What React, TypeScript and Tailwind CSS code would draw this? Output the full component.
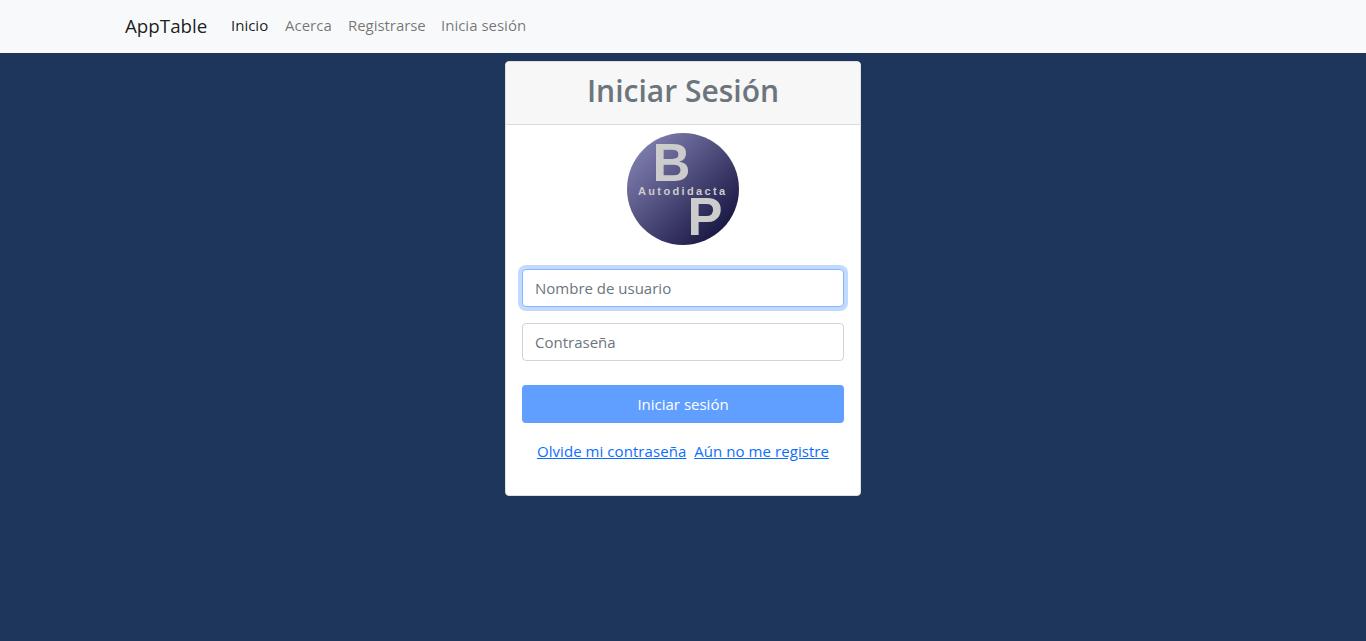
import React from "react";

const links = [
  { label: "Inicio", style: "w-[38px] text-black/90" },
  { label: "Acerca", style: "w-[47px] text-black/55" },
  { label: "Registrarse", style: "w-[77px] text-black/55 tracking-[-0.05px]" },
  { label: "Inicia sesión", style: "w-[85px] text-black/55" },
];

function Navbar() {
  return (
    <nav className="flex h-[53px] items-center bg-[#f8f9fa] pl-[125px] pb-px">
      <a href="#" className="mr-6 w-[82px] whitespace-nowrap text-[18.75px] leading-[30px] text-black/90">
        AppTable
      </a>
      <ul className="flex gap-4 pb-[3px]">
        {links.map((l) => (
          <li key={l.label} className={`whitespace-nowrap ${l.style}`}>
            <a href="#">{l.label}</a>
          </li>
        ))}
      </ul>
    </nav>
  );
}

function Logo() {
  return (
    <svg width="112" height="112" viewBox="0 0 112 112" className="mx-auto block" fontFamily="Liberation Sans, sans-serif" fontWeight="700" fill="#cccccc">
      <defs>
        <linearGradient id="disc" x1="0" y1="0" x2="0.9" y2="0.9">
          <stop offset="0" stopColor="#8e8ebf" />
          <stop offset="1" stopColor="#15123f" />
        </linearGradient>
      </defs>
      <circle cx="56" cy="56" r="56" fill="url(#disc)" />
      <text x="25.5" y="48" fontSize="53" textLength="38" lengthAdjust="spacingAndGlyphs">B</text>
      <text x="60.5" y="102" fontSize="53" textLength="35" lengthAdjust="spacingAndGlyphs">P</text>
      <text x="11" y="62" fontSize="11" letterSpacing="2.35">Autodidacta</text>
    </svg>
  );
}

const field =
  "block h-[38px] w-full rounded border bg-white px-3 pb-px text-[15px] outline-none placeholder:text-[#6c757d] placeholder:opacity-100";

export default function App() {
  return (
    <div className="min-h-screen bg-[#1e365c] font-['Open_Sans',sans-serif] text-[15px] leading-6">
      <Navbar />
      <main className="mx-auto mt-2 h-[435px] w-[356px] overflow-hidden rounded border border-[#dfdfdf] bg-white">
        <header className="h-[63px] border-b border-[#dadbdc] bg-[#f7f7f7] pt-2 text-center">
          <h3 className="whitespace-nowrap text-[30px] font-semibold leading-[42px] text-[#6c757d]">Iniciar Sesión</h3>
        </header>
        <div className="px-4 pt-2">
          <Logo />
          <form className="mt-6">
            <input
              aria-label="Nombre de usuario"
              placeholder="Nombre de usuario"
              className={`${field} border-[#86b7fe] shadow-[0_0_0_4px_#c2daff]`}
            />
            <input
              type="password"
              aria-label="Contraseña"
              placeholder="Contraseña"
              className={`${field} mt-4 border-[#ced4da]`}
            />
            <button type="button" className="mt-6 h-[38px] w-full rounded bg-[#609fff] text-[15px] text-white">
              Iniciar sesión
            </button>
          </form>
          <div className="mt-4 flex justify-center gap-2 whitespace-nowrap tracking-[0.06px] text-[#0d6efd] underline">
            <a href="#">Olvide mi contraseña</a>
            <a href="#">Aún no me registre</a>
          </div>
        </div>
      </main>
    </div>
  );
}
